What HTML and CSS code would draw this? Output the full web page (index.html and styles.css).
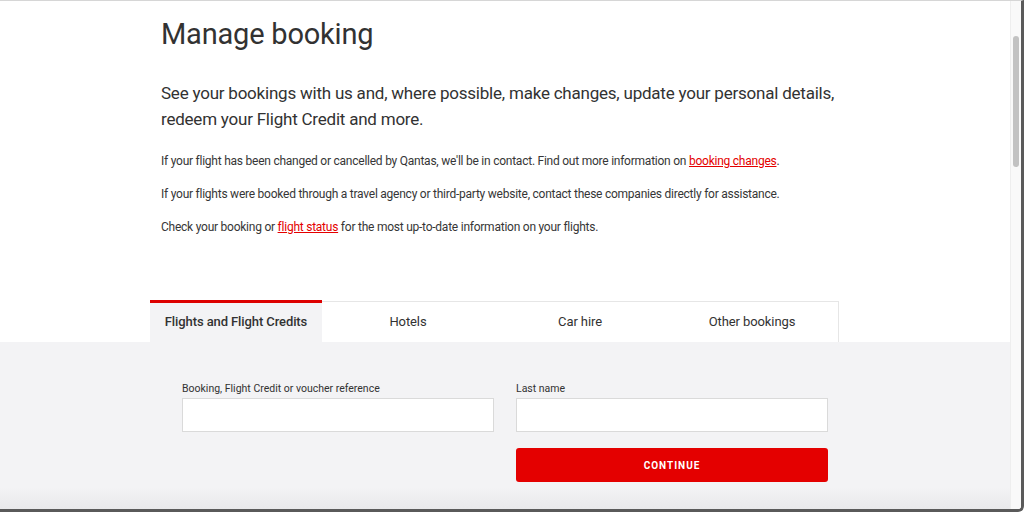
FILE: index.html
```html
<!DOCTYPE html>
<html lang="en">
<head>
<meta charset="utf-8">
<title>Manage booking</title>
<link rel="stylesheet" href="styles.css">
</head>
<body>
<div class="window">
  <div class="page">
    <div class="intro">
      <div class="container">
        <h1 class="title">Manage booking</h1>
        <p class="lead">See your bookings with us and, where possible, make changes, update your personal details, redeem your Flight Credit and more.</p>
        <p class="note">If your flight has been changed or cancelled by Qantas, we'll be in contact. Find out more information on <a class="link" href="#">booking changes</a>.</p>
        <p class="note">If your flights were booked through a travel agency or third-party website, contact these companies directly for assistance.</p>
        <p class="note">Check your booking or <a class="link" href="#">flight status</a> for the most up-to-date information on your flights.</p>
      </div>
    </div>
    <div class="tabs-wrap">
      <div class="container tabs">
        <div class="tab active">Flights and Flight Credits</div>
        <div class="tab">Hotels</div>
        <div class="tab">Car hire</div>
        <div class="tab last">Other bookings</div>
      </div>
    </div>
    <div class="panel">
      <div class="container">
        <form class="form">
          <label class="field">
            <span class="label">Booking, Flight Credit or voucher reference</span>
            <input class="input" type="text">
          </label>
          <label class="field">
            <span class="label">Last name</span>
            <input class="input" type="text">
          </label>
          <div class="spacer"></div>
          <button class="btn" type="button">CONTINUE</button>
        </form>
      </div>
    </div>
  </div>
  <div class="scrollbar"><div class="thumb"></div></div>
</div>
</body>
</html>
```

FILE: styles.css
```css
* { box-sizing: border-box; }
html, body { margin: 0; padding: 0; }
body {
  width: 1024px;
  height: 512px;
  overflow: hidden;
  background: #fff;
  font-family: Roboto, "Liberation Sans", Arial, sans-serif;
  color: #323232;
}
.window {
  width: 1024px;
  height: 512px;
  display: flex;
  border-top: 1px solid #d6d6d6;
  border-right: 3px solid #5a5a5a;
  border-bottom: 3px solid #5a5a5a;
  border-bottom-right-radius: 6px;
  overflow: hidden;
}
.page {
  flex: 1;
  display: flex;
  flex-direction: column;
  min-width: 0;
}
.container {
  width: 689px;
  margin-left: 150px;
}
.intro .container { padding-left: 11px; width: 700px; }
.title {
  margin: 13px 0 0;
  font-size: 29px;
  line-height: 40px;
  font-weight: 400;
  letter-spacing: -0.2px;
  color: #323232;
}
.lead {
  margin: 26px 0 0;
  font-size: 17px;
  line-height: 26px;
  letter-spacing: -0.22px;
}
.note {
  margin: 18px 0 0;
  font-size: 12px;
  line-height: 15px;
  letter-spacing: -0.24px;
  color: #363636;
}
.lead + .note { margin-top: 22px; }
.link { color: #e40000; text-decoration: underline; }
.tabs-wrap { margin-top: 66px; }
.tabs {
  display: flex;
  height: 41px;
  border-top: 1px solid #e6e6e6;
  border-right: 1px solid #e6e6e6;
}
.tab {
  flex: 1;
  display: flex;
  align-items: center;
  justify-content: center;
  font-size: 13px;
  color: #323232;
  letter-spacing: -0.1px;
  padding-bottom: 1px;
}
.tab.active {
  background: #f3f3f5;
  border-top: 3px solid #dd0000;
  margin-top: -2px;
  font-weight: 500;
  padding-bottom: 2px;
}
.panel {
  flex: 1;
  background: linear-gradient(to bottom, #f3f3f5 0, #f3f3f5 calc(100% - 22px), #e9e9eb 100%);
}
.form {
  margin: 40px 0 0 32px;
  width: 646px;
  display: grid;
  grid-template-columns: 312px 312px;
  column-gap: 22px;
  row-gap: 16px;
}
.field { display: flex; flex-direction: column; }
.label {
  font-size: 10.5px;
  line-height: 14px;
  margin-bottom: 2px;
  color: #323232;
}
.input {
  height: 34px;
  border: 1px solid #dadada;
  background: #fff;
  border-radius: 0;
  margin: 0;
}
.btn {
  height: 34px;
  border: 0;
  border-radius: 3px;
  background: #e40000;
  color: #fff;
  font-family: Roboto, "Liberation Sans", Arial, sans-serif;
  font-weight: 700;
  font-size: 10px;
  letter-spacing: 1px;
  padding: 0;
}
.scrollbar {
  width: 11px;
  background: #f9f9f9;
  border-left: 1px solid #eeeeee;
  padding: 35px 0 0 2px;
}
.thumb {
  width: 6px;
  height: 131px;
  border-radius: 3px;
  background: #c2c2c2;
}
```
